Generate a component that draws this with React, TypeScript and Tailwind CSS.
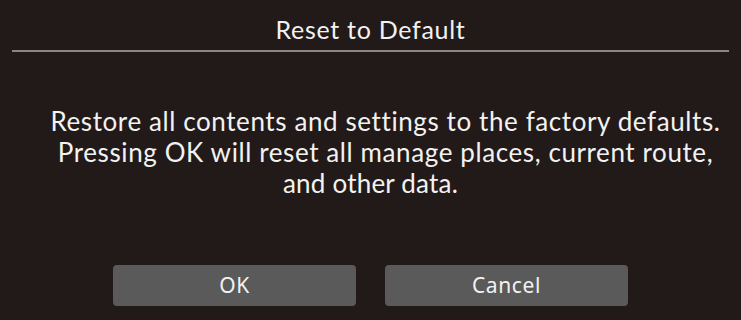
import React from "react";

export default function App() {
  return (
    <div className="w-[741px] h-[320px] bg-[#221a19] flex flex-col text-[#f2f2f2] overflow-hidden" style={{ fontFamily: "Lato, 'Noto Sans', sans-serif" }}>
      <div className="h-[50px] flex items-center justify-center text-[25px] tracking-[0.7px] leading-none pt-[8px]">Reset to Default</div>
      <div className="mx-[12px] h-[2px] bg-[#8a8685]" />
      <div className="mt-[54px] flex flex-col items-center text-[26px] tracking-[0.6px] leading-[31px] text-center">
        <div className="pl-[30px]">Restore all contents and settings to the factory defaults.</div>
        <div className="pl-[30px]">Pressing OK will reset all manage places, current route,</div>
        <div className="tracking-[0.2px]">and other data.</div>
      </div>
      <div className="mt-[66px] flex justify-center gap-[29px]" style={{ fontFamily: "'Noto Sans', sans-serif" }}>
        <div className="w-[243px] h-[41px] rounded-[4px] bg-[#5a5a5a] flex items-center justify-center text-[21px] tracking-[0.6px]">OK</div>
        <div className="w-[243px] h-[41px] rounded-[4px] bg-[#5a5a5a] flex items-center justify-center text-[21px] tracking-[0.6px]">Cancel</div>
      </div>
    </div>
  );
}
